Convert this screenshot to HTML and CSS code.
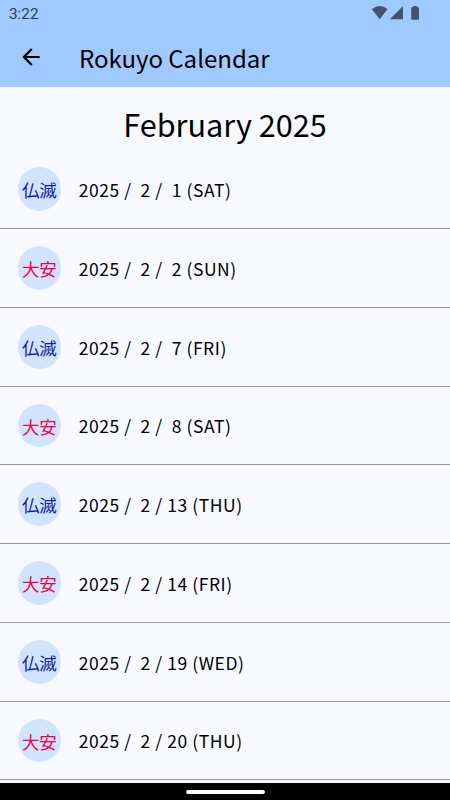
FILE: index.html
```html
<!DOCTYPE html>
<html lang="en">
  <head>
    <meta charset="UTF-8" />
    <meta name="viewport" content="width=device-width, initial-scale=1.0" />
    <title>Rokuyo Calendar</title>
    <link rel="stylesheet" href="styles.css">
  </head>
  <body>
    <header class="header">
      <div class="status-bar">
        <span class="time">3:22</span>
        <svg class="status-icons" width="50" height="16" viewBox="0 0 50 16">
          <path d="M-0.2 4 Q7.7 -1.8 15.6 4 L7.7 14.2 Z" />
          <path d="M17.8 14.2 L31 1 V14.2 Z" />
          <path d="M41.3 1 h3.6 v1.2 h1.4 q0.7 0 0.7 0.7 v11.2 q0 0.7 -0.7 0.7 h-6.4 q-0.7 0 -0.7 -0.7 v-11.2 q0 -0.7 0.7 -0.7 h1.4 z" />
        </svg>
      </div>
      <div class="app-bar">
        <button type="button" class="back" aria-label="Back">
          <svg width="26" height="26" viewBox="0 0 24 24">
            <path d="M20 11H7.83l5.59-5.59L12 4l-8 8 8 8 1.41-1.41L7.83 13H20v-2z" />
          </svg>
        </button>
        <h1>Rokuyo Calendar</h1>
      </div>
    </header>
    <main class="content">
      <h2>February 2025</h2>
      <ul class="days">
        <li><span class="badge butsumetsu" lang="ja">仏滅</span><span class="date">2025 /  2 /  1 (SAT)</span></li>
        <li><span class="badge taian" lang="ja">大安</span><span class="date">2025 /  2 /  2 (SUN)</span></li>
        <li><span class="badge butsumetsu" lang="ja">仏滅</span><span class="date">2025 /  2 /  7 (FRI)</span></li>
        <li><span class="badge taian" lang="ja">大安</span><span class="date">2025 /  2 /  8 (SAT)</span></li>
        <li><span class="badge butsumetsu" lang="ja">仏滅</span><span class="date">2025 /  2 / 13 (THU)</span></li>
        <li><span class="badge taian" lang="ja">大安</span><span class="date">2025 /  2 / 14 (FRI)</span></li>
        <li><span class="badge butsumetsu" lang="ja">仏滅</span><span class="date">2025 /  2 / 19 (WED)</span></li>
        <li><span class="badge taian" lang="ja">大安</span><span class="date">2025 /  2 / 20 (THU)</span></li>
      </ul>
    </main>
    <footer class="nav-bar">
      <div class="handle"></div>
    </footer>
  </body>
</html>
```

FILE: styles.css
```css
* {
  box-sizing: border-box;
}
body {
  font-family: "Noto Sans CJK JP", sans-serif;
  background-color: #f8f9ff;
  color: #000;
  display: flex;
  flex-direction: column;
  height: 100vh;
  margin: 0;
  overflow: hidden;
}
.header {
  flex: none;
  height: 87.3px;
  background-color: #a0c9ff;
}
.status-bar {
  display: flex;
  justify-content: space-between;
  height: 27px;
  padding: 5px 28px 0 9px;
}
.time {
  font-family: Roboto, sans-serif;
  font-size: 15.3px;
  line-height: 18px;
  color: #2c3d52;
}
.status-icons {
  fill: #41546b;
  overflow: visible;
}
.app-bar {
  display: flex;
  align-items: center;
  height: 60px;
  padding-left: 17.5px;
}
.back {
  display: flex;
  width: 26px;
  height: 26px;
  margin: 0 35.5px 0 0;
  padding: 0;
  border: none;
  background: none;
  cursor: pointer;
}
h1 {
  margin: 0;
  padding-top: 2px;
  font-size: 24px;
  font-weight: 400;
  line-height: 36px;
}
.content {
  flex: 1;
  min-height: 0;
  overflow: hidden;
}
h2 {
  height: 63px;
  margin: 0;
  font-size: 30.6px;
  font-weight: 400;
  line-height: 75px;
  text-align: center;
}
.days {
  list-style: none;
  margin: 0;
  padding: 0;
}
.days li {
  display: flex;
  align-items: center;
  height: 78.75px;
  padding-left: 17.5px;
  border-bottom: 1px solid #9a9a9a;
}
.badge {
  flex: none;
  width: 43.75px;
  height: 43.75px;
  margin-right: 17.5px;
  border-radius: 50%;
  background-color: #d0e4ff;
  font-size: 17.5px;
  line-height: 45px;
  text-align: center;
}
.butsumetsu {
  color: #101ca8;
}
.taian {
  color: #f00040;
}
.date {
  font-size: 17.5px;
  letter-spacing: 0.55px;
  line-height: 26px;
  padding-top: 2px;
  white-space: pre;
}
.nav-bar {
  display: flex;
  flex: none;
  justify-content: center;
  height: 17px;
  padding-top: 7px;
  background-color: #000;
}
.handle {
  width: 79px;
  height: 4px;
  border-radius: 2px;
  background-color: #fff;
}
```
